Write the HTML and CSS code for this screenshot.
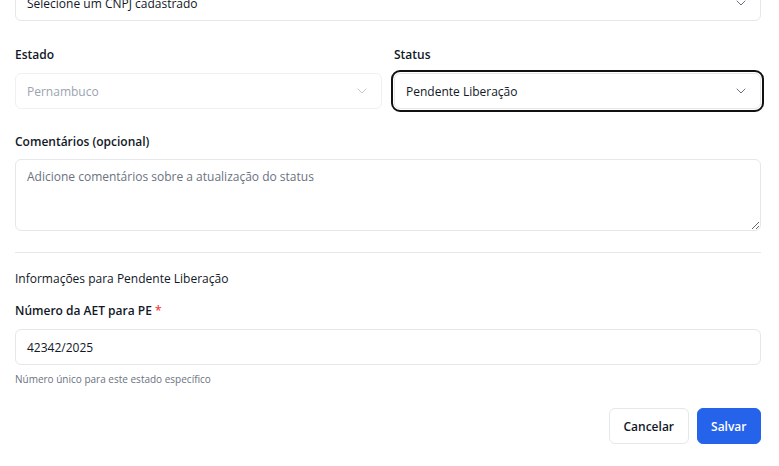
FILE: index.html
```html
<!DOCTYPE html>
<html lang="pt-BR">
<head>
<meta charset="utf-8">
<title>Atualizar status</title>
<link rel="stylesheet" href="styles.css">
</head>
<body>
<div class="form">
  <div class="field field-top">
    <div class="select">
      <span class="select-text">Selecione um CNPJ cadastrado</span>
      <svg class="chev" width="10" height="6" viewBox="0 0 10 6"><path d="M1 1l4 4 4-4" fill="none" stroke="#6b7280" stroke-width="1" stroke-linecap="round" stroke-linejoin="round"/></svg>
    </div>
  </div>

  <div class="row">
    <div class="field">
      <label class="label">Estado</label>
      <div class="select disabled">
        <span class="select-text">Pernambuco</span>
        <svg class="chev" width="10" height="6" viewBox="0 0 10 6"><path d="M1 1l4 4 4-4" fill="none" stroke="#c4c7cc" stroke-width="1" stroke-linecap="round" stroke-linejoin="round"/></svg>
      </div>
    </div>
    <div class="field">
      <label class="label">Status</label>
      <div class="select focused">
        <span class="select-text">Pendente Liberação</span>
        <svg class="chev" width="10" height="6" viewBox="0 0 10 6"><path d="M1 1l4 4 4-4" fill="none" stroke="#6b7280" stroke-width="1" stroke-linecap="round" stroke-linejoin="round"/></svg>
      </div>
    </div>
  </div>

  <div class="field">
    <label class="label label-c">Comentários (opcional)</label>
    <textarea class="textarea" placeholder="Adicione comentários sobre a atualização do status"></textarea>
  </div>

  <hr class="divider">

  <div class="section-title">Informações para Pendente Liberação</div>

  <div class="field">
    <label class="label">Número da AET para PE <span class="req">*</span></label>
    <div class="input">42342/2025</div>
    <div class="help">Número único para este estado específico</div>
  </div>

  <div class="actions">
    <button class="btn btn-outline">Cancelar</button>
    <button class="btn btn-primary">Salvar</button>
  </div>
</div>
</body>
</html>
```

FILE: styles.css
```css
* { box-sizing: border-box; }
html, body { margin: 0; padding: 0; background: #fff; }
body {
  font-family: "Open Sans", "Noto Sans", sans-serif;
  font-size: 12px;
  color: #111827;
  overflow: hidden;
}
.form {
  padding: 0 18px 0 15px;
  margin-top: -15px;
  display: flex;
  flex-direction: column;
}
.field {
  display: flex;
  flex-direction: column;
}
.field-top { margin-bottom: 25px; }
.row {
  display: grid;
  grid-template-columns: 1fr 1fr;
  column-gap: 12px;
  margin-bottom: 23px;
}
.label {
  font-weight: 600;
  font-size: 12px;
  line-height: 18px;
  margin-bottom: 9px;
  color: #111827;
}
.label-c { margin-top: 1px; margin-bottom: 8px; }
.req { color: #ef4444; font-weight: 600; }
.select {
  height: 36px;
  border: 1px solid #e5e7eb;
  border-radius: 6px;
  padding: 0 14px 0 11px;
  display: flex;
  align-items: center;
  justify-content: space-between;
  background: #fff;
}
.select-text { font-size: 12px; color: #111827; }
.select.disabled { border-color: #eef0f2; }
.select.disabled .select-text { color: #9ca3af; }
.select.focused {
  outline: 2px solid #111;
  outline-offset: 1px;
}
.chev { display: block; }
.textarea {
  height: 72px;
  border: 1px solid #e5e7eb;
  border-radius: 6px;
  padding: 8px 11px;
  font-family: inherit;
  font-size: 12px;
  color: #111827;
  resize: vertical;
  width: 100%;
}
.textarea::placeholder { color: #6b7280; }
.divider {
  border: 0;
  border-top: 1px solid #e5e7eb;
  margin: 21px 0 0 0;
}
.section-title {
  font-weight: 500;
  font-size: 12px;
  line-height: 18px;
  margin-top: 17px;
  margin-bottom: 14px;
  color: #111827;
}
.input {
  height: 36px;
  border: 1px solid #e5e7eb;
  border-radius: 6px;
  padding: 0 11px;
  display: flex;
  align-items: center;
  font-size: 12px;
  color: #111827;
}
.help {
  font-size: 10px;
  line-height: 14px;
  color: #6b7280;
  margin-top: 7px;
}
.actions {
  display: flex;
  justify-content: flex-end;
  gap: 8px;
  margin-top: 22px;
}
.btn {
  height: 36px;
  border-radius: 6px;
  font-family: inherit;
  font-size: 12px;
  font-weight: 600;
  padding: 0 13.5px;
  cursor: pointer;
}
.btn-outline {
  background: #fff;
  border: 1px solid #e5e7eb;
  color: #111827;
}
.btn-primary {
  background: #2563eb;
  border: 1px solid #2563eb;
  color: #fff;
}
```
